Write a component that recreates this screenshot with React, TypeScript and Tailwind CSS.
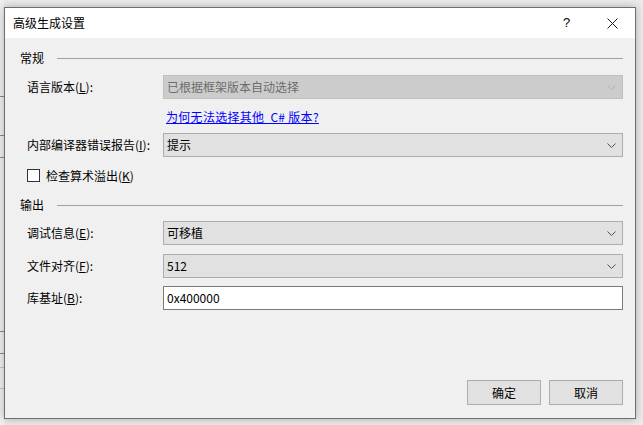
import React from "react";

const font = { fontFamily: '"Noto Sans CJK SC", "Noto Sans", sans-serif' };

function Chevron({ disabled }: { disabled?: boolean }) {
  return (
    <svg width="9" height="5" viewBox="0 0 9 5" className="shrink-0">
      <path d="M0.5 0.5 L4.5 4.5 L8.5 0.5" fill="none" stroke={disabled ? "#b0b0b0" : "#505050"} strokeWidth="1" />
    </svg>
  );
}

function Select({ value, disabled }: { value: string; disabled?: boolean }) {
  return (
    <div
      className={
        "w-[460px] h-[24px] flex items-center justify-between pl-[3px] pr-[6px] border " +
        (disabled ? "bg-[#cccccc] border-[#bfbfbf] text-[#6d6d6d]" : "bg-[#e1e1e1] border-[#adadad] text-black")
      }
    >
      <span className="leading-[16px]">{value}</span>
      <Chevron disabled={disabled} />
    </div>
  );
}

function Row({ label, children, mt }: { label: React.ReactNode; children: React.ReactNode; mt: string }) {
  return (
    <div className={"flex items-center h-[24px] " + mt}>
      <div className="w-[158px] pl-[22px] leading-[16px] text-black">{label}</div>
      {children}
    </div>
  );
}

function Section({ title, mt }: { title: string; mt: string }) {
  return (
    <div className={"flex items-center h-[16px] pl-[15px] pr-[12px] " + mt}>
      <span className="leading-[16px] text-black">{title}</span>
      <div className="flex-1 h-px bg-[#a0a0a0] ml-[13px]" />
    </div>
  );
}

export default function App() {
  return (
    <div className="w-[643px] h-[425px] bg-[#ebebeb] flex overflow-hidden text-[12px]" style={font}>
      <div className="w-[4px] h-full flex flex-col bg-[#f0f0f0]">
        <div className="h-[96px]" />
        <div className="h-px bg-[#8a8a8a]" />
        <div className="h-[38px]" />
        <div className="h-px bg-[#8a8a8a]" />
        <div className="h-[21px]" />
        <div className="h-px bg-[#8a8a8a]" />
        <div className="h-[173px]" />
        <div className="h-px bg-[#8a8a8a]" />
        <div className="h-[21px]" />
        <div className="h-px bg-[#8a8a8a]" />
        <div className="h-[13px]" />
        <div className="h-px bg-[#c8c8c8]" />
        <div className="h-[20px]" />
        <div className="h-px bg-[#c8c8c8]" />
      </div>
      <div className="pt-[7px]">
        <div className="w-[632px] h-[412px] border border-[#6e6e6e] bg-[#f0f0f0] flex flex-col shadow-[0_0_8px_rgba(0,0,0,0.28)]">
          <div className="h-[30px] bg-white flex items-center shrink-0">
            <span className="pl-[8px] flex-1 text-black leading-[16px]">高级生成设置</span>
            <div className="w-[45px] h-full flex items-center justify-center text-[13px] text-black" style={{ fontFamily: '"Liberation Sans", sans-serif' }}>
              ?
            </div>
            <div className="w-[46px] h-full flex items-center justify-center">
              <svg width="11" height="11" viewBox="0 0 11 11">
                <path d="M0.5 0.5 L10.5 10.5 M10.5 0.5 L0.5 10.5" stroke="#1a1a1a" strokeWidth="1" />
              </svg>
            </div>
          </div>
          <div className="flex flex-col flex-1">
            <Section title="常规" mt="mt-[12px]" />
            <Row label={<>语言版本(<u>L</u>):</>} mt="mt-[9px]">
              <Select value="已根据框架版本自动选择" disabled />
            </Row>
            <div className="h-[16px] mt-[10px] flex items-center pl-[161px]">
              <span className="text-[#0000ff] underline leading-[16px] tracking-[0.3px]">为何无法选择其他&nbsp; C# 版本?</span>
            </div>
            <Row label={<>内部编译器错误报告(<u>I</u>):</>} mt="mt-[8px]">
              <Select value="提示" />
            </Row>
            <div className="flex items-center h-[13px] mt-[12px] pl-[22px]">
              <div className="w-[13px] h-[13px] bg-white border border-[#333333]" />
              <span className="ml-[6px] leading-[16px] text-black">检查算术溢出(<u>K</u>)</span>
            </div>
            <Section title="输出" mt="mt-[15px]" />
            <Row label={<>调试信息(<u>E</u>):</>} mt="mt-[8px]">
              <Select value="可移植" />
            </Row>
            <Row label={<>文件对齐(<u>F</u>):</>} mt="mt-[9px]">
              <Select value="512" />
            </Row>
            <Row label={<>库基址(<u>B</u>):</>} mt="mt-[8px]">
              <div className="w-[460px] h-[24px] flex items-center pl-[3px] bg-white border border-[#7a7a7a] text-black">
                <span className="leading-[16px]">0x400000</span>
              </div>
            </Row>
            <div className="flex-1" />
            <div className="flex justify-end gap-[8px] pr-[12px] mb-[13px]">
              <div className="w-[74px] h-[25px] bg-[#e1e1e1] border border-[#adadad] flex items-center justify-center text-black leading-[16px]">确定</div>
              <div className="w-[74px] h-[25px] bg-[#e1e1e1] border border-[#adadad] flex items-center justify-center text-black leading-[16px]">取消</div>
            </div>
          </div>
        </div>
      </div>
    </div>
  );
}
